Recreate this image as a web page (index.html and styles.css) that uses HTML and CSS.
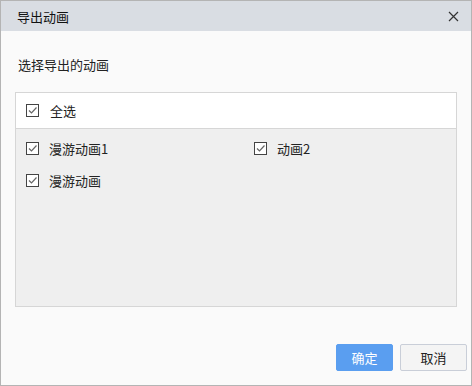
FILE: index.html
```html
<!DOCTYPE html>
<html lang="zh-CN">
<head>
    <meta charset="UTF-8">
    <title>导出动画</title>
    <link rel="stylesheet" href="styles.css">
</head>
<body>
    <div class="dialog">
        <div class="title-bar">
            <span class="title">导出动画</span>
            <svg class="close" width="11" height="11" viewBox="0 0 11 11">
                <path d="M1 1 L10 10 M10 1 L1 10" stroke="#333" stroke-width="1.2" fill="none"/>
            </svg>
        </div>

        <div class="content">
            <div class="label">选择导出的动画</div>

            <div class="panel">
                <div class="panel-head">
                    <span class="check"><svg viewBox="0 0 11 11"><path d="M2 5.5 L4.5 8 L9.5 2.5" stroke="#666" stroke-width="1.2" fill="none"/></svg></span>
                    <span class="item-text">全选</span>
                </div>
                <div class="panel-list">
                    <div class="item">
                        <span class="check"><svg viewBox="0 0 11 11"><path d="M2 5.5 L4.5 8 L9.5 2.5" stroke="#666" stroke-width="1.2" fill="none"/></svg></span>
                        <span class="item-text">漫游动画1</span>
                    </div>
                    <div class="item">
                        <span class="check"><svg viewBox="0 0 11 11"><path d="M2 5.5 L4.5 8 L9.5 2.5" stroke="#666" stroke-width="1.2" fill="none"/></svg></span>
                        <span class="item-text">动画2</span>
                    </div>
                    <div class="item">
                        <span class="check"><svg viewBox="0 0 11 11"><path d="M2 5.5 L4.5 8 L9.5 2.5" stroke="#666" stroke-width="1.2" fill="none"/></svg></span>
                        <span class="item-text">漫游动画</span>
                    </div>
                </div>
            </div>
        </div>

        <div class="footer">
            <button class="btn btn-primary">确定</button>
            <button class="btn">取消</button>
        </div>
    </div>
</body>
</html>
```

FILE: styles.css
```css
* {
    margin: 0;
    padding: 0;
    box-sizing: border-box;
}

body {
    font-family: "Noto Sans CJK SC", "Noto Sans", sans-serif;
    font-size: 13px;
    color: #222;
    background: #fafafa;
}

.dialog {
    width: 472px;
    height: 386px;
    border: 1px solid #b4b4b4;
    background: #fafafa;
    display: flex;
    flex-direction: column;
}

.title-bar {
    height: 30px;
    background: #d9dde3;
    display: flex;
    align-items: center;
    justify-content: space-between;
    padding: 0 12px 0 16px;
}

.title {
    font-size: 13px;
    color: #111;
}

.close {
    display: block;
}

.content {
    flex: 1;
    padding: 24px 14px 0 14px;
}

.label {
    line-height: 20px;
    height: 20px;
    padding-left: 3px;
    color: #222;
}

.panel {
    margin-top: 17px;
    height: 215px;
    border: 1px solid #d6d6d6;
    background: #efefef;
    display: flex;
    flex-direction: column;
}

.panel-head {
    height: 36px;
    background: #fff;
    border-bottom: 1px solid #d6d6d6;
    display: flex;
    align-items: center;
    padding-left: 10px;
}

.panel-list {
    display: grid;
    grid-template-columns: 228px 1fr;
    grid-auto-rows: 32px;
    padding: 3px 0 0 10px;
}

.item {
    display: flex;
    align-items: center;
}

.check {
    width: 13px;
    height: 13px;
    border: 1px solid #444;
    background: #fff;
    display: flex;
    align-items: center;
    justify-content: center;
}

.check svg {
    width: 11px;
    height: 11px;
    display: block;
}

.item-text {
    margin-left: 10px;
    color: #222;
}

.panel-head .item-text {
    margin-left: 11px;
}

.footer {
    display: flex;
    justify-content: flex-end;
    gap: 7px;
    padding: 0 4px 14px 0;
}

.btn {
    font-family: inherit;
    font-size: 13px;
    height: 27px;
    width: 67px;
    border: 1px solid #c9ced8;
    border-radius: 2px;
    background: #f4f4f4;
    color: #222;
}

.btn-primary {
    width: 57px;
    background: #5a9ef0;
    border-color: #5a9ef0;
    color: #fff;
}
```
